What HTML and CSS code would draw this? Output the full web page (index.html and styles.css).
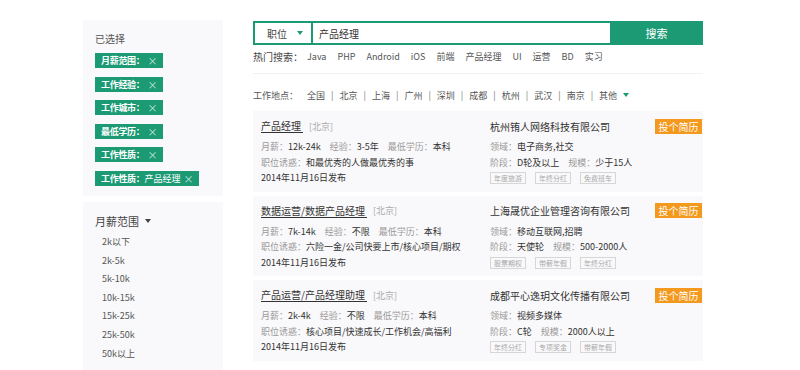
FILE: index.html
```html
<!DOCTYPE html>
<html lang="zh-CN">
  <head>
    <meta charset="UTF-8" />
    <meta name="viewport" content="width=device-width, initial-scale=1.0" />
    <title>职位搜索</title>
    <link rel="stylesheet" href="styles.css">
  </head>
  <body>
    <div class="page">
      <aside class="sidebar">
        <div class="panel selected">
          <div class="panel-title">已选择</div>
          <div class="tag"><b>月薪范围：</b><span class="close">×</span></div>
          <div class="tag"><b>工作经验：</b><span class="close">×</span></div>
          <div class="tag"><b>工作城市：</b><span class="close">×</span></div>
          <div class="tag"><b>最低学历：</b><span class="close">×</span></div>
          <div class="tag"><b>工作性质：</b><span class="close">×</span></div>
          <div class="tag"><b>工作性质：</b>产品经理<span class="close">×</span></div>
        </div>
        <div class="panel filter">
          <div class="filter-title">月薪范围 <span class="caret"></span></div>
          <ul class="filter-list">
            <li>2k以下</li>
            <li>2k-5k</li>
            <li>5k-10k</li>
            <li>10k-15k</li>
            <li>15k-25k</li>
            <li>25k-50k</li>
            <li>50k以上</li>
          </ul>
        </div>
      </aside>

      <main class="content">
        <div class="search">
          <div class="search-box">
            <div class="search-type">职位<span class="caret green"></span></div>
            <div class="search-input">产品经理</div>
          </div>
          <button class="search-btn">搜索</button>
        </div>

        <div class="hot">
          <span class="hot-label">热门搜索：</span>
          <a>Java</a><a>PHP</a><a>Android</a><a>iOS</a><a>前端</a><a>产品经理</a><a>UI</a><a>运营</a><a>BD</a><a>实习</a>
        </div>

        <div class="city">
          <span class="city-label">工作地点：</span>
          <a>全国</a><i>|</i><a>北京</a><i>|</i><a>上海</a><i>|</i><a>广州</a><i>|</i><a>深圳</a><i>|</i><a>成都</a><i>|</i><a>杭州</a><i>|</i><a>武汉</a><i>|</i><a>南京</a><i>|</i><a>其他</a><span class="caret green"></span>
        </div>

        <ul class="jobs">
          <li class="job">
            <div class="job-left">
              <div class="job-title"><a>产品经理</a><span class="job-city">[北京]</span></div>
              <div class="job-row"><span class="lbl">月薪：</span><span class="val">12k-24k</span><span class="lbl">经验：</span><span class="val">3-5年</span><span class="lbl">最低学历：</span><span class="val">本科</span></div>
              <div class="job-row"><span class="lbl">职位诱惑：</span><span class="val">和最优秀的人做最优秀的事</span></div>
              <div class="job-row date">2014年11月16日发布</div>
            </div>
            <div class="job-right">
              <div class="company"><span class="company-name">杭州铕人网络科技有限公司</span><button class="apply">投个简历</button></div>
              <div class="job-row"><span class="lbl">领域：</span><span class="val">电子商务,社交</span></div>
              <div class="job-row"><span class="lbl">阶段：</span><span class="val">D轮及以上</span><span class="lbl">规模：</span><span class="val">少于15人</span></div>
              <div class="perks"><span>年度旅游</span><span>年终分红</span><span>免费班车</span></div>
            </div>
          </li>
          <li class="job">
            <div class="job-left">
              <div class="job-title"><a>数据运营/数据产品经理</a><span class="job-city">[北京]</span></div>
              <div class="job-row"><span class="lbl">月薪：</span><span class="val">7k-14k</span><span class="lbl">经验：</span><span class="val">不限</span><span class="lbl">最低学历：</span><span class="val">本科</span></div>
              <div class="job-row"><span class="lbl">职位诱惑：</span><span class="val">六险一金/公司快要上市/核心项目/期权</span></div>
              <div class="job-row date">2014年11月16日发布</div>
            </div>
            <div class="job-right">
              <div class="company"><span class="company-name">上海晟优企业管理咨询有限公司</span><button class="apply">投个简历</button></div>
              <div class="job-row"><span class="lbl">领域：</span><span class="val">移动互联网,招聘</span></div>
              <div class="job-row"><span class="lbl">阶段：</span><span class="val">天使轮</span><span class="lbl">规模：</span><span class="val">500-2000人</span></div>
              <div class="perks"><span>股票期权</span><span>带薪年假</span><span>年终分红</span></div>
            </div>
          </li>
          <li class="job">
            <div class="job-left">
              <div class="job-title"><a>产品运营/产品经理助理</a><span class="job-city">[北京]</span></div>
              <div class="job-row"><span class="lbl">月薪：</span><span class="val">2k-4k</span><span class="lbl">经验：</span><span class="val">不限</span><span class="lbl">最低学历：</span><span class="val">本科</span></div>
              <div class="job-row"><span class="lbl">职位诱惑：</span><span class="val">核心项目/快速成长/工作机会/高福利</span></div>
              <div class="job-row date">2014年11月16日发布</div>
            </div>
            <div class="job-right">
              <div class="company"><span class="company-name">成都平心逸玥文化传播有限公司</span><button class="apply">投个简历</button></div>
              <div class="job-row"><span class="lbl">领域：</span><span class="val">视频多媒体</span></div>
              <div class="job-row"><span class="lbl">阶段：</span><span class="val">C轮</span><span class="lbl">规模：</span><span class="val">2000人以上</span></div>
              <div class="perks"><span>年终分红</span><span>专项奖金</span><span>带薪年假</span></div>
            </div>
          </li>
        </ul>
      </main>
    </div>
  </body>
</html>
```

FILE: styles.css
```css
body {
  margin: 0;
  background-color: #fff;
  font-family: "Noto Sans CJK SC", "Open Sans", sans-serif;
  color: #333;
}
ul {
  margin: 0;
  padding: 0;
  list-style: none;
}
.page {
  display: flex;
  gap: 30px;
  padding: 20px 0 0 83px;
}
.sidebar {
  width: 140px;
  flex-shrink: 0;
}
.panel {
  background-color: #f9f8fa;
  padding: 12px 0 10px 12px;
}
.panel-title {
  font-size: 10px;
  line-height: 14px;
  color: #555;
  margin-bottom: 7px;
}
.tag {
  display: flex;
  align-items: center;
  width: max-content;
  height: 15px;
  padding: 0 5px 0 6px;
  margin-bottom: 8.6px;
  background-color: #1c9a74;
  color: #fff;
  font-size: 9px;
}
.tag:last-child {
  margin-bottom: 0;
}
.tag b {
  font-weight: bold;
  letter-spacing: -0.3px;
}
.tag .close {
  margin-left: 3px;
  color: rgba(255, 255, 255, 0.75);
  font-size: 10px;
}
.filter {
  margin-top: 6px;
  padding-top: 11px;
  height: 160px;
}
.filter-title {
  display: flex;
  align-items: center;
  font-size: 11px;
  line-height: 16px;
  color: #444;
}
.caret {
  display: inline-block;
  width: 0;
  height: 0;
  margin-left: 6px;
  border-left: 3px solid transparent;
  border-right: 3px solid transparent;
  border-top: 4px solid #444;
}
.caret.green {
  border-top-color: #1c9a74;
}
.filter-list {
  margin-top: 4px;
  padding-left: 7px;
}
.filter-list li {
  font-size: 9px;
  line-height: 18.6px;
  color: #555;
}

.content {
  width: 450px;
  margin-top: 1px;
}
.search {
  display: flex;
  height: 24px;
}
.search-box {
  flex: 1;
  display: flex;
  border: 2px solid #1c9a74;
  border-right: none;
}
.search-type {
  width: 58px;
  display: flex;
  align-items: center;
  justify-content: space-between;
  padding: 0 8px 0 12px;
  box-sizing: border-box;
  border-right: 2px solid #1c9a74;
  font-size: 10px;
  color: #444;
}
.search-input {
  display: flex;
  align-items: center;
  padding-left: 6px;
  font-size: 10px;
  color: #333;
}
.search-btn {
  width: 93px;
  border: none;
  background-color: #1c9a74;
  color: #fff;
  font-family: inherit;
  font-size: 11px;
  padding: 0;
}
.hot {
  display: flex;
  align-items: center;
  gap: 11px;
  margin-top: 4px;
  height: 14px;
  padding-bottom: 10px;
  border-bottom: 1px solid #f2f2f2;
  font-size: 9px;
  color: #555;
}
.hot .hot-label {
  font-size: 10px;
  color: #444;
  margin-right: -7px;
}
.city {
  display: flex;
  align-items: center;
  height: 14px;
  margin-top: 14px;
  font-size: 9px;
  color: #555;
}
.city .city-label {
  margin-right: 9px;
}
.city i {
  font-style: normal;
  color: #777;
  margin: 0 6px;
}
.jobs {
  margin-top: 9px;
}
.job {
  display: flex;
  background-color: #f9f8fa;
  padding: 7px 1px 6px 8px;
  margin-bottom: 4px;
}
.job-left {
  width: 229px;
}
.job-right {
  flex: 1;
}
.job-title {
  display: flex;
  align-items: center;
  height: 16px;
  margin-bottom: 5px;
}
.job-title a {
  font-size: 10px;
  color: #333;
  border-bottom: 1px solid #333;
  padding-right: 2px;
  line-height: 13px;
}
.job-city {
  margin-left: 6px;
  font-size: 9px;
  color: #aaa;
}
.job-row {
  font-size: 9px;
  line-height: 15.5px;
  white-space: nowrap;
}
.lbl {
  color: #999;
}
.val {
  color: #333;
  margin-right: 9px;
}
.date {
  color: #333;
}
.company {
  display: flex;
  align-items: center;
  justify-content: space-between;
  height: 16px;
  margin-bottom: 5px;
}
.company-name {
  font-size: 10px;
  color: #333;
}
.apply {
  height: 15px;
  width: 47px;
  padding: 0;
  border: none;
  background-color: #f39a1e;
  color: #fff;
  font-family: inherit;
  font-size: 10px;
  line-height: 15px;
}
.perks {
  display: flex;
  gap: 9px;
  margin-top: 2px;
}
.perks span {
  height: 10px;
  line-height: 10px;
  padding: 0 3px;
  border: 1px solid #d6d6d6;
  font-size: 7px;
  color: #aaa;
}
```
